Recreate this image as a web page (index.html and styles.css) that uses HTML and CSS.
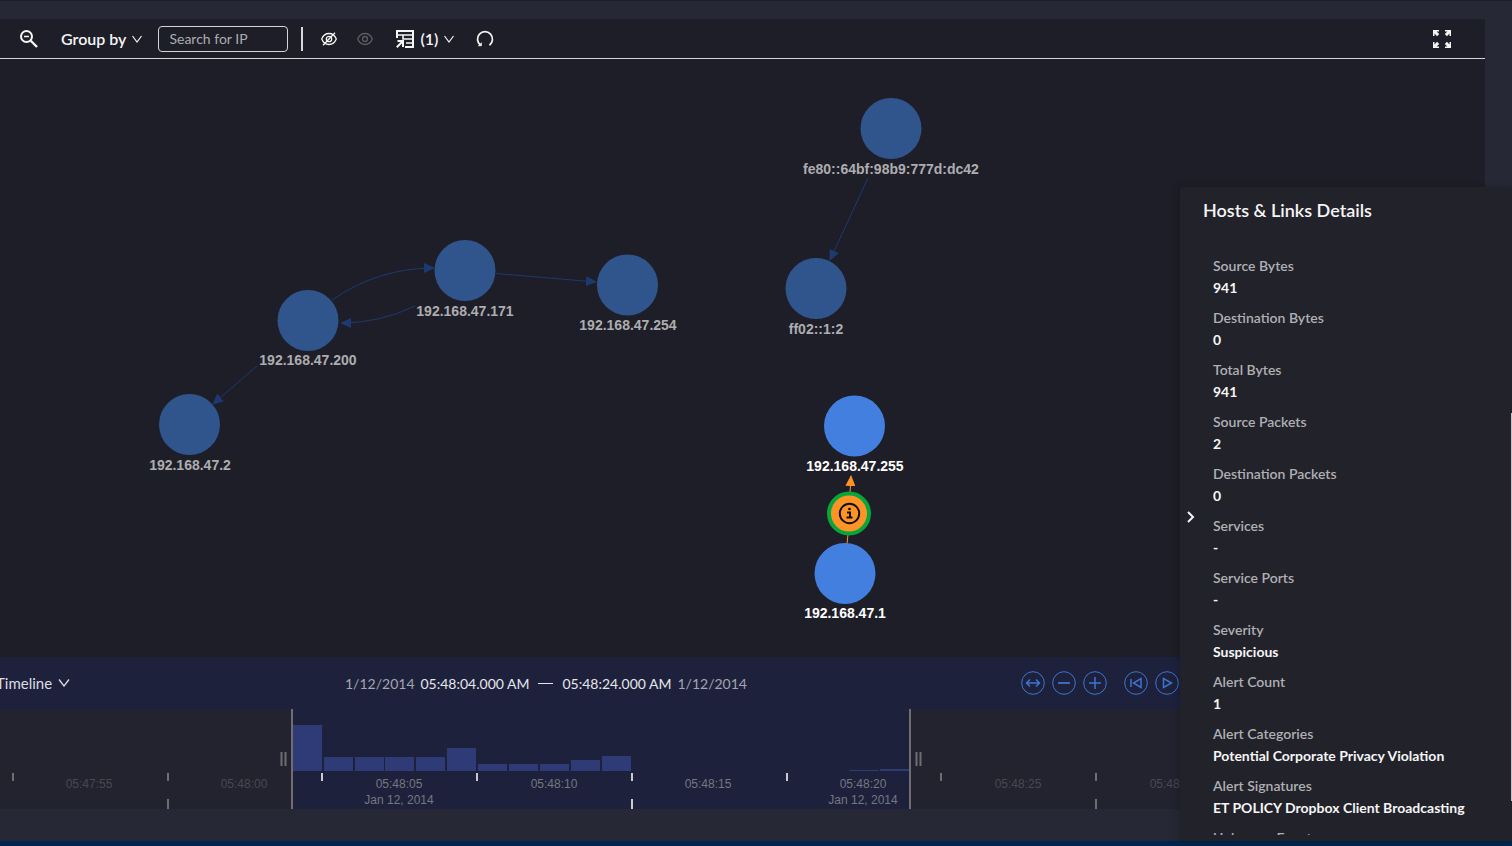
FILE: index.html
```html
<!DOCTYPE html>
<html lang="en">
<head>
<meta charset="utf-8">
<title>Hosts &amp; Links</title>
<link rel="stylesheet" href="styles.css">
</head>
<body>
<div class="app">
  <main class="card">
    <div class="toolbar">
      <button class="tool zoom-out" aria-label="Zoom out">
        <svg width="18" height="18" viewBox="0 0 18 18" fill="none" stroke="currentColor"><circle cx="6.5" cy="6.5" r="5.5" stroke-width="2"/><path d="M4 6.5h5" stroke-width="1.5"/><path d="M10.5 10.5l6.5 6.500" stroke-width="2.4"/></svg>
      </button>
      <button class="menu group-by">Group by
        <svg width="10" height="8" viewBox="0 0 10 8" fill="none" stroke="currentColor" stroke-width="1.2"><path d="M.5 1L5 7l4.500-6"/></svg>
      </button>
      <input class="search" type="text" placeholder="Search for IP" aria-label="Search for IP">
      <span class="divider"></span>
      <button class="tool hide" aria-label="Hide">
        <svg width="16" height="14" viewBox="0 0 16 14" fill="none" stroke="currentColor" stroke-width="1.300"><path d="M.7 7Q3 1.500 8 1.500T15.300 7Q13 12.500 8 12.500T.7 7z"/><circle cx="8" cy="7" r="2.700"/><path d="M14 .8L2 13.200"/></svg>
      </button>
      <button class="tool show" aria-label="Show" disabled>
        <svg width="16" height="14" viewBox="0 0 16 14" fill="none" stroke="currentColor" stroke-width="1.300"><path d="M.7 7Q3 1.500 8 1.500T15.300 7Q13 12.500 8 12.500T.7 7z"/><circle cx="8" cy="7" r="2.500"/></svg>
      </button>
      <button class="menu layers">
        <svg width="18" height="18" viewBox="0 0 18 18" fill="none" stroke="currentColor" stroke-width="2"><path d="M1 8V1h16v16H9"/><path d="M1 5h16M7 5v4h10M10 13h7" stroke-width="1.600"/><path d="M.8 17.200L7 11M1.500 11H7v6"/></svg>
        (1)
        <svg width="10" height="8" viewBox="0 0 10 8" fill="none" stroke="currentColor" stroke-width="1.200"><path d="M.5 1L5 7l4.500-6"/></svg>
      </button>
      <button class="tool reset" aria-label="Reset">
        <svg width="18" height="18" viewBox="0 0 18 18" fill="none" stroke="currentColor" stroke-width="1.700"><path d="M4.500 15.200A7.500 7.500 0 1 1 13.500 15.200"/><path d="M2.300 15.800h3.200v-3z" fill="currentColor" stroke-width=".6"/></svg>
      </button>
      <button class="tool fullscreen" aria-label="Full screen">
        <svg width="18" height="18" viewBox="0 0 18 18"><g fill="currentColor"><path id="corner" d="M0 0h6v1.500H3.600L6.200 4.100 4.100 6.200 1.500 3.600V6H0z"/><use href="#corner" transform="matrix(-1 0 0 1 18 0)"/><use href="#corner" transform="matrix(1 0 0 -1 0 18)"/><use href="#corner" transform="matrix(-1 0 0 -1 18 18)"/></g></svg>
      </button>
    </div>

    <div class="graph">
      <svg class="canvas" role="img" aria-label="Network graph">
        <defs>
          <marker id="arrow" markerUnits="userSpaceOnUse" markerWidth="11" markerHeight="10" refX="10" refY="5" orient="auto"><path class="arrow-dim" d="M0 0l11 5L0 10z"/></marker>
          <marker id="arrow-hot" markerUnits="userSpaceOnUse" markerWidth="11" markerHeight="10" refX="10" refY="5" orient="auto"><path class="arrow-hot" d="M0 0l11 5L0 10z"/></marker>
        </defs>
        <g class="links">
          <path d="M332 241Q378 209 434 209"/>
          <path d="M415 247Q380 264 341 264"/>
          <path d="M496 214.500L596 223"/>
          <path d="M257 307L213 345"/>
          <path d="M868 119L830 201"/>
        </g>
        <path class="link-hot" d="M847 485L848 475M850 434L851 417"/>
        <g class="nodes">
          <circle cx="891" cy="69.500" r="30.500"/>
          <circle cx="816" cy="229.500" r="30.500"/>
          <circle cx="465" cy="211.500" r="30.500"/>
          <circle cx="627.500" cy="226" r="30.500"/>
          <circle cx="308" cy="261.500" r="30.500"/>
          <circle cx="189.500" cy="365.500" r="30.500"/>
        </g>
        <g class="nodes active">
          <circle cx="854.500" cy="367" r="30.500"/>
          <circle cx="845" cy="514.500" r="30.500"/>
        </g>
        <g class="labels">
          <text x="891" y="115">fe80::64bf:98b9:777d:dc42</text>
          <text x="816" y="275">ff02::1:2</text>
          <text x="465" y="257">192.168.47.171</text>
          <text x="628" y="271">192.168.47.254</text>
          <text x="308" y="306">192.168.47.200</text>
          <text x="190" y="411">192.168.47.2</text>
        </g>
        <g class="labels active">
          <text x="855" y="412">192.168.47.255</text>
          <text x="845" y="559">192.168.47.1</text>
        </g>
        <g class="alert">
          <circle class="alert-ring" cx="849" cy="454.500" r="20"/>
          <circle class="alert-info" cx="849.500" cy="454.500" r="9.700"/>
          <path class="alert-mark" d="M847 453.500h3v5M846.500 458.500h6"/>
          <circle cx="849.500" cy="450" r="1.300"/>
        </g>
      </svg>
    </div>

    <section class="timeline">
      <div class="timeline-head">
        <button class="menu timeline-menu">Timeline
          <svg width="12" height="8" viewBox="0 0 12 8" fill="none" stroke="currentColor" stroke-width="1.300"><path d="M1 .5l5 6.500 5-6.500"/></svg>
        </button>
        <div class="range">
          <span class="date">1/12/2014</span>
          <span class="time">05:48:04.000 AM</span>
          <span class="dash"></span>
          <span class="time">05:48:24.000 AM</span>
          <span class="date">1/12/2014</span>
        </div>
        <div class="controls">
          <button class="round" aria-label="Fit"><svg width="24" height="24" viewBox="0 0 24 24"><circle cx="12" cy="12" r="11.300"/><path stroke-width="1.500" d="M5.500 12h13M9 8.500L5.500 12 9 15.500M15 8.500l3.500 3.500-3.500 3.500"/></svg></button>
          <button class="round" aria-label="Zoom out timeline"><svg width="24" height="24" viewBox="0 0 24 24"><circle cx="12" cy="12" r="11.300"/><path stroke-width="1.800" d="M6 12h12"/></svg></button>
          <button class="round" aria-label="Zoom in timeline"><svg width="24" height="24" viewBox="0 0 24 24"><circle cx="12" cy="12" r="11.300"/><path stroke-width="1.500" d="M6 12h12M12 6v12"/></svg></button>
          <button class="round playback" aria-label="Back to start"><svg width="24" height="24" viewBox="0 0 24 24"><circle cx="12" cy="12" r="11.300"/><path stroke-width="1.500" d="M7 8v8M17 7.500v9L9.500 12z"/></svg></button>
          <button class="round" aria-label="Play"><svg width="24" height="24" viewBox="0 0 24 24"><circle cx="12" cy="12" r="11.300"/><path stroke-width="1.500" d="M8.500 7.500v9l8-4.500z"/></svg></button>
        </div>
      </div>
      <svg class="histogram" role="img" aria-label="Traffic over time">
        <rect class="selection" x="292" y="0" width="618" height="100"/>
        <g class="bars">
          <rect x="293" y="16" width="29" height="46"/>
          <rect x="324" y="48" width="29" height="14"/>
          <rect x="355" y="48" width="29" height="14"/>
          <rect x="385" y="48" width="29" height="14"/>
          <rect x="416" y="48" width="29" height="14"/>
          <rect x="447" y="39" width="29" height="23"/>
          <rect x="478" y="55" width="29" height="7"/>
          <rect x="509" y="55" width="29" height="7"/>
          <rect x="540" y="55" width="29" height="7"/>
          <rect x="571" y="51" width="29" height="11"/>
          <rect x="602" y="47" width="29" height="15"/>
          <rect x="849" y="61" width="30" height="1"/>
          <rect x="880" y="60" width="29" height="2"/>
        </g>
        <path class="ticks dim" d="M13 64v8M168 64v8M168 90v10M941 64v8M1096 64v8M1096 90v10"/>
        <path class="ticks" d="M322 64v8M477 64v8M632 64v8M632 90v10M787 64v8"/>
        <path class="ticks handles" d="M292 0v100M910 0v100M281.500 43v14M285.500 43v14M916.500 43v14M920.500 43v14"/>
        <g class="axis dim">
          <text x="89" y="79">05:47:55</text>
          <text x="244" y="79">05:48:00</text>
          <text x="1018" y="79">05:48:25</text>
          <text x="1173" y="79">05:48:30</text>
        </g>
        <g class="axis">
          <text x="399" y="79">05:48:05</text>
          <text x="399" y="95">Jan 12, 2014</text>
          <text x="554" y="79">05:48:10</text>
          <text x="708" y="79">05:48:15</text>
          <text x="863" y="79">05:48:20</text>
          <text x="863" y="95">Jan 12, 2014</text>
        </g>
      </svg>
    </section>
  </main>
  <footer class="footer"></footer>

  <aside class="drawer">
    <button class="collapse" aria-label="Collapse details">
      <svg width="8" height="12" viewBox="0 0 8 12" fill="none" stroke="currentColor" stroke-width="2"><path d="M1 1l5 5-5 5"/></svg>
    </button>
    <div class="details">
      <h2 class="details-title">Hosts &amp; Links Details</h2>
      <dl class="facts">
        <div><dt>Source Bytes</dt><dd>941</dd></div>
        <div><dt>Destination Bytes</dt><dd>0</dd></div>
        <div><dt>Total Bytes</dt><dd>941</dd></div>
        <div><dt>Source Packets</dt><dd>2</dd></div>
        <div><dt>Destination Packets</dt><dd>0</dd></div>
        <div><dt>Services</dt><dd>-</dd></div>
        <div><dt>Service Ports</dt><dd>-</dd></div>
        <div><dt>Severity</dt><dd>Suspicious</dd></div>
        <div><dt>Alert Count</dt><dd>1</dd></div>
        <div><dt>Alert Categories</dt><dd>Potential Corporate Privacy Violation</dd></div>
        <div><dt>Alert Signatures</dt><dd>ET POLICY Dropbox Client Broadcasting</dd></div>
        <div><dt>Unknown Events</dt></div>
      </dl>
    </div>
    <span class="scroll-thumb"></span>
  </aside>
</div>
</body>
</html>
```
FILE: styles.css
```css
* {
  box-sizing: border-box;
}

body {
  margin: 0;
  background: #262835;
  color: #f5f5f5;
  font-family: Lato, "Liberation Sans", sans-serif;
  font-size: 14px;
}

button {
  display: flex;
  align-items: center;
  padding: 0;
  border: 0;
  background: none;
  color: inherit;
  font: inherit;
  white-space: nowrap;
}

.app {
  position: relative;
  display: flex;
  flex-direction: column;
  height: 100vh;
  overflow: hidden;
  border-top: 1px solid #1e1e27;
}

.card {
  display: flex;
  flex: 1;
  flex-direction: column;
  min-height: 0;
  margin: 18px 27px 32px 0;
  background: #1e1e28;
}

.toolbar {
  display: flex;
  align-items: center;
  height: 40px;
  padding: 0 34px 0 20px;
  border-bottom: 1px solid #d4d4da;
}

.menu {
  gap: 6px;
  font-size: 16px;
  font-weight: 600;
}

.group-by {
  margin-left: 23px;
}

.search {
  width: 130px;
  height: 26px;
  margin-left: 16px;
  padding: 0 10px;
  border: 1px solid #d4d4da;
  border-radius: 4px;
  background: none;
  color: #f5f5f5;
  font: inherit;
}

.search::placeholder {
  color: #acacb0;
  opacity: 1;
}

.divider {
  width: 2px;
  height: 24px;
  margin-left: 13px;
  background: #d8d8dc;
}

.hide {
  margin-left: 18px;
}

.show {
  margin-left: 20px;
  color: #5c5c64;
}

.layers {
  margin-left: 23px;
}

.reset {
  margin-left: 22px;
}

.fullscreen {
  margin-left: auto;
}

.graph {
  flex: 1;
  min-height: 0;
}

.canvas {
  display: block;
  width: 100%;
  height: 100%;
}

.links {
  fill: none;
  stroke: #1d3a70;
}

.links path {
  marker-end: url(#arrow);
}

.arrow-dim {
  fill: #1d3a70;
}

.link-hot {
  fill: none;
  stroke: #ff9426;
  marker-end: url(#arrow-hot);
}

.arrow-hot {
  fill: #ff9426;
}

.nodes {
  fill: #30558d;
}

.nodes.active {
  fill: #437fdf;
}

.labels {
  fill: #adadb0;
  font: bold 14px "Liberation Sans", sans-serif;
  text-anchor: middle;
}

.labels.active {
  fill: #ffffff;
}

.alert-ring {
  fill: #ff9426;
  stroke: #07a63c;
  stroke-width: 4;
}

.alert-info,
.alert-mark {
  fill: none;
  stroke: #111111;
  stroke-width: 2;
}

.timeline {
  background: #1e213c;
}

.timeline-head {
  display: grid;
  grid-template-columns: 345px 1fr auto;
  align-items: center;
  height: 52px;
  padding-right: 306px;
}

.timeline-menu {
  margin-left: -4px;
  color: #dcdce2;
  font-size: 15px;
  font-weight: 400;
}

.range {
  display: flex;
  align-items: center;
  gap: 6px;
}

.date {
  color: #a4a5ae;
}

.time {
  color: #e6e6ea;
}

.dash {
  width: 15px;
  height: 1px;
  margin: 0 3px;
  background: #e6e6ea;
}

.controls {
  display: flex;
  gap: 7px;
}

.round svg {
  fill: none;
  stroke: #3d74d2;
}

.playback {
  margin-left: 10px;
}

.histogram {
  display: block;
  width: 100%;
  height: 100px;
  background: #22232e;
}

.selection {
  fill: #1e213c;
}

.bars {
  fill: #2e3b76;
}

.ticks {
  stroke: #c9c9cf;
  stroke-width: 2;
}

.ticks.dim,
.ticks.handles {
  stroke: #6e6e71;
}

.axis {
  fill: #76777f;
  font: 12px "Liberation Sans", sans-serif;
  text-anchor: middle;
}

.axis.dim {
  fill: #48494f;
}

.footer {
  height: 5px;
  background: #00264f;
}

/* Details drawer lies over the graph and timeline */
.drawer {
  position: absolute;
  top: 186px;
  right: 0;
  bottom: 5px;
  display: flex;
  width: 332px;
  padding: 0 16px 6px 7px;
  border-radius: 4px 0 0 0;
  background: #22222b;
  box-shadow: -2px 0 8px rgba(0, 0, 0, 0.2);
}

.collapse {
  width: 8px;
  margin: 12px 8px 0 0;
}

.details {
  flex: 1;
  min-width: 0;
  overflow: hidden;
}

.details-title {
  margin: 11px 0 33px;
  font-size: 18px;
  font-weight: 600;
  line-height: 24px;
}

.facts {
  display: grid;
  gap: 8px;
  margin: 0;
  padding-left: 10px;
  font-weight: 600;
  line-height: 22px;
}

.facts dt {
  color: #b0b0b3;
}

.facts dd {
  margin: 0;
  font-weight: 700;
}

.scroll-thumb {
  position: absolute;
  top: 226px;
  right: 0;
  width: 1px;
  height: 388px;
  background: #c4c4c8;
}
```
